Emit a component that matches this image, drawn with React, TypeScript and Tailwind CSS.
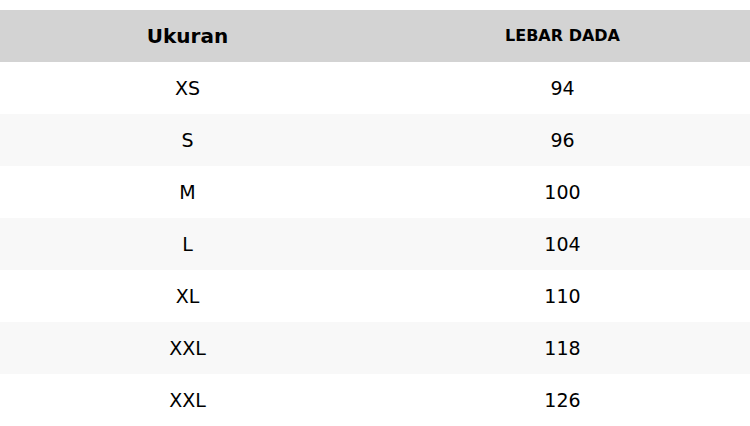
import React from "react";

const rows: [string, string][] = [
  ["XS", "94"],
  ["S", "96"],
  ["M", "100"],
  ["L", "104"],
  ["XL", "110"],
  ["XXL", "118"],
  ["XXL", "126"],
];

export default function App() {
  return (
    <div className="w-[750px] h-[426px] bg-white pt-[10px] overflow-hidden text-black" style={{ fontFamily: '"DejaVu Sans", Verdana, sans-serif' }}>
      <div className="grid grid-cols-2 h-[52px] bg-[#d3d3d3] items-center text-center font-bold">
        <div className="text-[20px]">Ukuran</div>
        <div className="text-[16px]">LEBAR DADA</div>
      </div>
      {rows.map(([a, b], i) => (
        <div
          key={i}
          className={`grid grid-cols-2 h-[52px] items-center text-center text-[19px] ${i % 2 === 1 ? "bg-[#f8f8f8]" : "bg-white"}`}
        >
          <div>{a}</div>
          <div>{b}</div>
        </div>
      ))}
    </div>
  );
}
